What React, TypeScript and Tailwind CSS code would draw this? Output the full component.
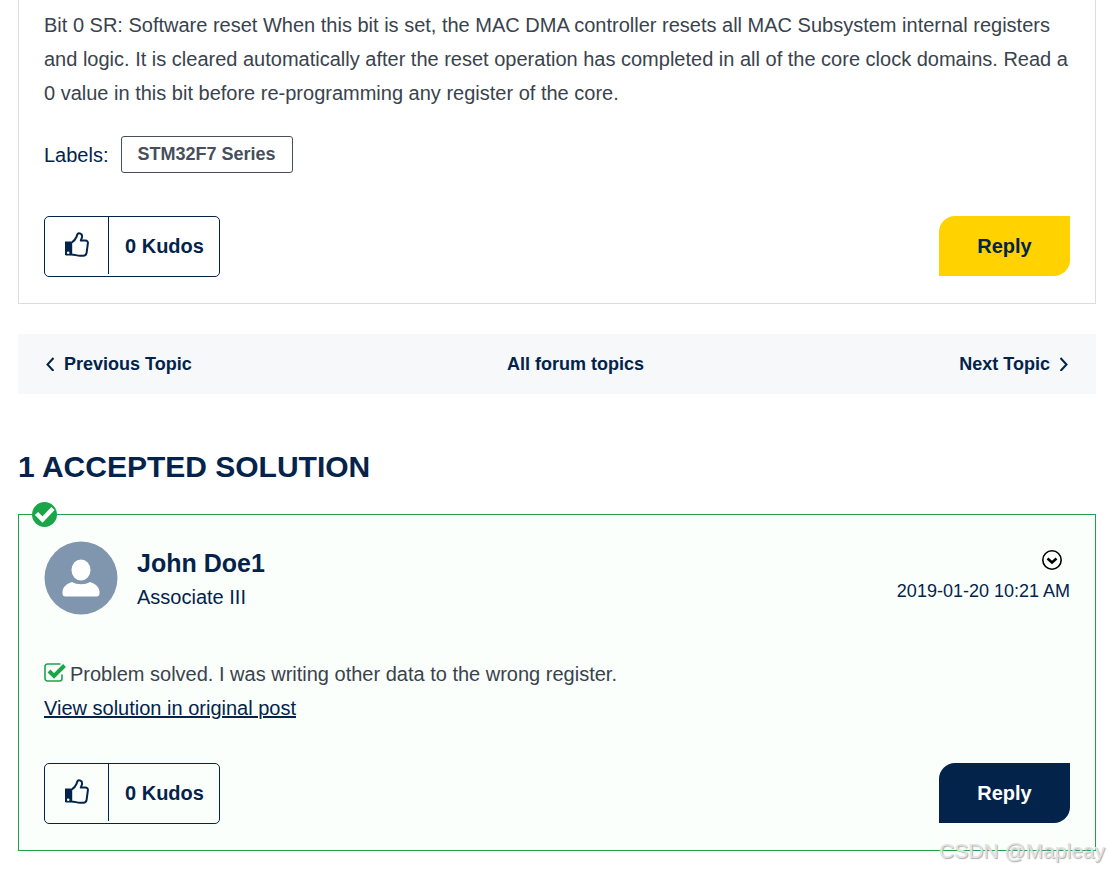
import { useState } from "react";

function ThumbIcon() {
  return (
    <svg viewBox="0 0 24 25" className="mb-[2px] h-[25px] w-6" fill="none" aria-hidden="true">
      <path d="M0 9.500h6v14H1.200Q0 23.500 0 22.300z" fill="#03234b" />
      <circle cx="3.200" cy="20.800" r="1.300" fill="#fff" />
      <path
        d="M6.200 11c3.200-2 4.600-4 5.400-6.300.5-1.500.5-3.500 2.400-3.500 2.300 0 3.300 1.900 3 3.900-.2 1.400-.9 2.300-1.200 3.500H20.500c1.600 0 2.600 1.100 2.400 2.600l-1.300 9.600c-.3 1.900-1.400 2.900-3.300 2.900H15c-3.500 0-5-1.200-8.800-1.200z"
        stroke="#03234b"
        strokeWidth="2"
        strokeLinejoin="round"
      />
    </svg>
  );
}

function PostActions({ variant }: { variant: "yellow" | "navy" }) {
  const [kudos, setKudos] = useState(0);

  return (
    <div className="flex items-start justify-between">
      <div className="flex h-[61px] rounded-[5px] border border-[#03234b] pb-[2px]">
        <button
          type="button"
          aria-label="Give kudos"
          onClick={() => setKudos(kudos + 1)}
          className="flex w-16 items-center justify-center border-r border-[#03234b]"
        >
          <ThumbIcon />
        </button>
        <span className="flex items-center pr-[15px] pl-4 font-bold">{kudos} Kudos</span>
      </div>
      <button
        type="button"
        className={
          variant === "yellow"
            ? "h-[60px] w-[131px] rounded-tl-2xl rounded-br-2xl bg-[#ffd200] font-bold"
            : "h-[60px] w-[131px] rounded-tl-2xl rounded-br-2xl bg-[#03234b] font-bold text-white"
        }
      >
        Reply
      </button>
    </div>
  );
}

export default function App() {
  return (
    <div className="relative bg-white pr-[13px] pl-[18px] pb-5 font-['Liberation_Sans',Arial,sans-serif] text-xl text-[#03234b]">
      {/* Question */}
      <article className="border border-t-0 border-[#dcdddf] px-[25px] pt-2 pb-[26px]">
        <p className="leading-[34px] text-[#39434d]">
          Bit 0 SR: Software reset When this bit is set, the MAC DMA controller resets all MAC
          Subsystem internal registers and logic. It is cleared automatically after the reset
          operation has completed in all of the core clock domains. Read a 0 value in this bit
          before re-programming any register of the core.
        </p>
        <div className="mt-[26px] mb-[43px] flex items-center gap-3">
          <span>Labels:</span>
          <a
            href="#"
            className="flex h-[37px] items-center rounded-[3px] border border-[#464f5b] px-4 pb-[2px] text-lg font-bold text-[#464f5b]"
          >
            STM32F7 Series
          </a>
        </div>
        <PostActions variant="yellow" />
      </article>

      {/* Topic navigation */}
      <nav className="mt-[30px] flex h-[60px] items-center justify-between bg-[#f6f8fa] px-7 text-lg font-bold">
        <a href="#" className="flex items-center gap-[10px]">
          <svg viewBox="0 0 8 14" className="h-[14px] w-2" fill="none" stroke="currentColor" strokeWidth="2" aria-hidden="true">
            <path d="M7.500 1 1.500 7.500 7.500 14" />
          </svg>
          Previous Topic
        </a>
        <a href="#">All forum topics</a>
        <a href="#" className="flex items-center gap-[10px]">
          Next Topic
          <svg viewBox="0 0 8 14" className="h-[14px] w-2" fill="none" stroke="currentColor" strokeWidth="2" aria-hidden="true">
            <path d="m.5 1 6 6.500-6 6.500" />
          </svg>
        </a>
      </nav>

      <h2 className="mt-[53px] mb-[27px] text-[30px] leading-10 font-bold">1 ACCEPTED SOLUTION</h2>

      {/* Solution */}
      <article className="relative border border-[#1fa34a] bg-[#fbfffc] px-[25px] pt-[26px] pb-[26px]">
        <svg viewBox="0 0 26 26" className="absolute -top-[13px] left-[13px] h-[26px] w-[26px]" fill="none" aria-hidden="true">
          <circle cx="12.500" cy="12.500" r="12.500" fill="#1aa648" />
          <path d="m4.500 11.500 6 6L21 6.500" stroke="#fff" strokeWidth="4.500" />
        </svg>
        <header className="flex items-start">
          <svg viewBox="0 0 74 74" className="h-[74px] w-[74px]" aria-hidden="true">
            <circle cx="37" cy="37" r="36.500" fill="#8096ae" />
            <ellipse cx="37" cy="29" rx="9.500" ry="10.500" fill="#fff" />
            <path d="M28 41c5 3 13 3 18 0 5 1.500 9.500 5 9.500 10v1.500c0 2-1 3-3 3h-31c-2 0-3-1-3-3V51c0-5 4.500-8.500 9.500-10z" fill="#fff" />
          </svg>
          <div className="ml-[19px] grow pt-1">
            <h3 className="text-[25px] leading-9 font-bold">John Doe1</h3>
            <p className="leading-8">Associate III</p>
          </div>
          <div className="flex flex-col items-end gap-[5px] pt-[9px]">
            <button type="button" aria-label="Post options" className="mr-2">
              <svg viewBox="0 0 20 20" className="h-5 w-5" fill="none" stroke="#000" aria-hidden="true">
                <circle cx="10" cy="10" r="9.200" strokeWidth="1.600" />
                <path d="m5.500 8.500 4.500 4 4.500-4" strokeWidth="2.500" />
              </svg>
            </button>
            <time dateTime="2019-01-20T10:21" className="text-lg leading-8">
              2019-01-20 10:21 AM
            </time>
          </div>
        </header>

        <div className="mt-[42px] mb-[38px] leading-[34px]">
          <p className="flex items-center gap-1 text-[#39434d]">
            <svg viewBox="0 0 22 20" className="mb-1 h-5 w-[22px]" fill="none" stroke="#1aa648" aria-hidden="true">
              <path d="M16.500 2H3.500A2.500 2.500 0 0 0 1 4.500v12A2.500 2.500 0 0 0 3.500 19H15.500A2.500 2.500 0 0 0 18 16.500v-4" strokeWidth="1.600" />
              <path d="m5 9 5 5L20.500 3.500" strokeWidth="4" />
            </svg>
            Problem solved. I was writing other data to the wrong register.
          </p>
          <a href="#" className="underline decoration-2">
            View solution in original post
          </a>
        </div>
        <PostActions variant="navy" />
      </article>

      <span className="absolute right-1 bottom-1 text-[21px] leading-8 text-[#e2e3e4] [text-shadow:1px_1px_1px_#a9abad]">
        CSDN @Mapleay
      </span>
    </div>
  );
}
